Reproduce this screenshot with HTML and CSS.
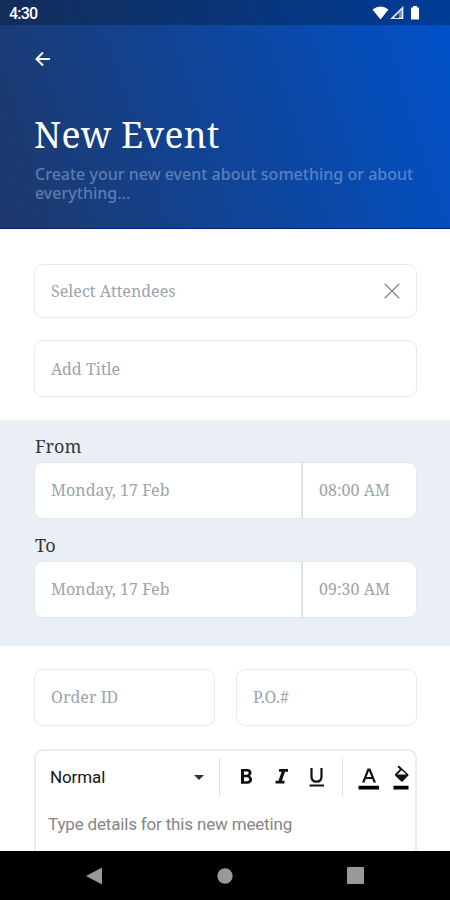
FILE: index.html
```html
<!DOCTYPE html>
<html lang="en">
<head>
<meta charset="utf-8">
<title>New Event</title>
<link rel="stylesheet" href="styles.css">
</head>
<body>
<div class="screen">
  <header class="hero">
    <div class="status">
      <span class="clock">4:30</span>
      <svg class="status-icons" width="52" height="18" viewBox="0 0 52 18">
        <path d="M0.5 4.500Q8.500-1.500 16.500 4.500L8.500 14.500Z" fill="#fff"/>
        <path d="M31.300 1.500V14H18.500Z" fill="#7590c6"/>
        <path d="M30.500 2.800V13.300H20Z" fill="none" stroke="#e6edfb" stroke-width="1.500"/>
        <path d="M27 8v5h-5z" fill="#123d83"/>
        <path d="M41 1h4v1.500h2V14.500h-8V2.500h2z" fill="#fff"/>
      </svg>
    </div>
    <svg class="back" width="16" height="16" viewBox="0 0 16 16"><path d="M15 8H2M8 1.500L1.500 8L8 14.500" fill="none" stroke="#fff" stroke-width="2"/></svg>
    <h1 class="title">New Event</h1>
    <p class="subtitle">Create your new event about something or about everything...</p>
  </header>
  <main class="form">
    <section class="group people">
      <div class="field attendees"><span class="hint">Select Attendees</span>
        <svg width="16" height="16" viewBox="0 0 16 16"><path d="M.7.7l14.600 14.600M15.300.7L.7 15.300" stroke="#858585" stroke-width="1.300"/></svg>
      </div>
      <div class="field"><span class="hint">Add Title</span></div>
    </section>
    <section class="schedule">
      <div class="label">From</div>
      <div class="field split"><span class="hint date">Monday, 17 Feb</span><span class="hint time">08:00 AM</span></div>
      <div class="label second">To</div>
      <div class="field split"><span class="hint date">Monday, 17 Feb</span><span class="hint time">09:30 AM</span></div>
    </section>
    <section class="group orders">
      <div class="field"><span class="hint">Order ID</span></div>
      <div class="field"><span class="hint">P.O.#</span></div>
    </section>
    <section class="editor">
      <div class="toolbar">
        <div class="style-select"><span>Normal</span><svg width="10" height="5" viewBox="0 0 10 5"><path d="M0 0h10L5 5z" fill="#333"/></svg></div>
        <svg class="tools" width="196" height="40" viewBox="0 0 196 40">
          <path d="M.5 1v38M123.500 1v38" stroke="#dedede"/>
          <g transform="translate(1 -1)">
          <path fill-rule="evenodd" d="M21 13h6.500c2.500 0 4 1.500 4 3.700 0 1.500-.8 2.600-1.900 3.200 1.600.6 2.500 1.900 2.500 3.600 0 2.600-1.900 4.300-4.600 4.300H21zM24 15.500v3.200h2.900c1.100 0 1.700-.6 1.700-1.600s-.6-1.600-1.700-1.600zm0 5.700v4h3.200c1.200 0 2-.8 2-2s-.8-2-2-2z" fill="#111"/>
          <path d="M59 13h9v2.800h-3l-3.100 9h2.600v2.800h-9v-2.800h3l3.100-9H59z" fill="#111"/>
          <path d="M91.500 12v8.500c0 3.300 1.700 5.200 5 5.200s5-1.900 5-5.200V12" fill="none" stroke="#111" stroke-width="2.200"/>
          <path d="M89.500 28.500h14.500v2H89.500z" fill="#111"/>
          </g>
          <path fill-rule="evenodd" d="M148.600 11.500h2.800L157 25.500h-2.500l-1.300-3.500h-6.400l-1.300 3.500H143zM147.600 19.900h4.800L150 13.800z" fill="#111"/>
          <path d="M139.500 28.700h20.500v3.800h-20.500zM174.500 28.700h15v3.800h-15z" fill="#000"/>
          <path fill-rule="evenodd" transform="translate(0 -.8)" d="M178.400 10.700l1.500-1.300 9 8.300c.8.800.8 1.400 0 2.200l-4.800 5c-.8.700-1.500.7-2.300 0l-5.300-5.200c-.8-.8-.8-1.400 0-2.200l4.400-4.400zM178.200 18.300h9.100l-4.600-4.200z" fill="#111"/>
        </svg>
      </div>
      <p class="details">Type details for this new meeting</p>
    </section>
  </main>
  <nav class="navbar">
    <svg width="16" height="18" viewBox="0 0 16 18"><path d="M16 .5v17L0 9z" fill="#999"/></svg>
    <svg width="16" height="16" viewBox="0 0 16 16"><circle cx="8" cy="8" r="7.700" fill="#999"/></svg>
    <svg width="17" height="17" viewBox="0 0 17 17"><rect width="17" height="17" rx="1" fill="#999"/></svg>
  </nav>
</div>
</body>
</html>
```
FILE: styles.css
```css
* { box-sizing: border-box; }
body { margin: 0; background: #fff; }
h1, p { margin: 0; font-weight: 400; }
svg { display: block; flex: none; }
.screen {
  width: 450px; height: 900px; overflow: hidden;
  display: flex; flex-direction: column;
  font-family: "Noto Serif", "DejaVu Serif Condensed", "DejaVu Serif", serif;
}
.hero {
  height: 229px; flex: none; color: #fff;
  background: linear-gradient(72deg, #1e386b 0%, #0f459a 50%, #0051ca 100%);
  border-bottom: 1px solid #04207a;
}
.status {
  height: 25px; padding: 0 27px 0 9px; background: rgba(0, 0, 0, .25);
  display: flex; justify-content: space-between; align-items: center;
}
.clock { font: 500 16px/25px Roboto, sans-serif; letter-spacing: -.8px; padding-top: 2px; }
.status-icons { margin-top: 3px; margin-right: -1px; }
.back { margin: 26px 0 0 35px; }
.title { margin: 42px 0 0 34px; font-size: 35.5px; line-height: 50px; letter-spacing: .3px; white-space: nowrap; }
.subtitle { margin: 6px 20px 0 35px; font: 500 16px/19px "Noto Sans", sans-serif; letter-spacing: .01px; color: rgba(165, 188, 222, .5); }
.form { height: 622px; flex: none; overflow: hidden; }
.group { padding: 35px 33px 0 34px; }
.people { height: 191px; display: flex; flex-direction: column; gap: 22px; }
.field {
  height: 57px; border: 1.500px solid #e8e9ea; border-radius: 9px; background: #fff;
  padding: 0 16px; display: flex; align-items: center;
}
.attendees { height: 54px; justify-content: space-between; }
.hint { font-size: 16px; letter-spacing: .03px; color: #9ca4aa; white-space: nowrap; }
.schedule { height: 226px; background: #e9eff5; padding: 14px 33px 0 34px; }
.label { font-size: 18px; line-height: 24px; height: 28px; padding-left: 1px; color: #34383d; }
.label.second { margin-top: 14px; }
.split { border-color: #e2e9ec; padding: 0; height: 57px; }
.date { flex: 1; padding-left: 16px; line-height: 55px; }
.time { width: 115px; padding-left: 16px; border-left: 2px solid #dbe4e8; line-height: 55px; }
.orders { padding-top: 23px; display: grid; grid-template-columns: 181px 181px; gap: 21px; }
.orders .hint { margin-top: -2px; }
.editor {
  margin: 23px 33px 0 34px; height: 180px; border: 2px solid #ececee;
  border-radius: 9px; font-family: Roboto, sans-serif;
}
.toolbar { display: flex; padding-top: 6px; }
.style-select { width: 183px; height: 40px; padding: 0 15px 0 14px; display: flex; align-items: center; justify-content: space-between; font-size: 17px; letter-spacing: -.1px; color: #151515; }
.details { margin: 15px 0 0 12px; font-size: 17px; line-height: 24px; letter-spacing: -.17px; color: #858585; }
.navbar { height: 49px; flex: none; background: #000; display: flex; align-items: center; justify-content: space-between; padding: 0 86px; }
```
